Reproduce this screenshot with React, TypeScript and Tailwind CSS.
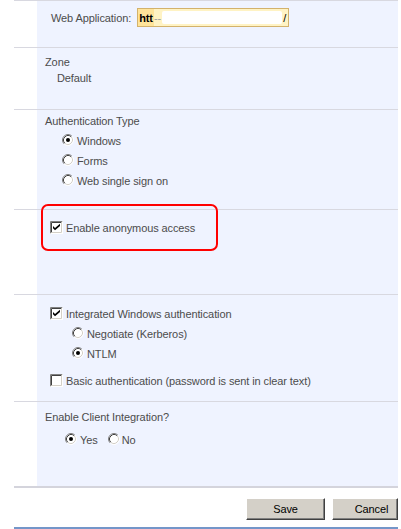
import React from "react";

function Radio({ checked = false }: { checked?: boolean }) {
  return (
    <svg width="12" height="12" viewBox="0 0 12 12" className="shrink-0">
      <circle cx="6" cy="6" r="5" fill="#ffffff" />
      <path d="M2.11 9.89 A5.5 5.5 0 0 1 9.89 2.11" fill="none" stroke="#808080" strokeWidth="1" />
      <path d="M9.89 2.11 A5.5 5.5 0 0 1 2.11 9.89" fill="none" stroke="#ffffff" strokeWidth="1" />
      <path d="M2.82 9.18 A4.5 4.5 0 0 1 9.18 2.82" fill="none" stroke="#404040" strokeWidth="1" />
      <path d="M9.18 2.82 A4.5 4.5 0 0 1 2.82 9.18" fill="none" stroke="#d4d0c8" strokeWidth="1" />
      {checked && <circle cx="6" cy="6" r="2" fill="#000000" />}
    </svg>
  );
}

function Checkbox({ checked = false }: { checked?: boolean }) {
  return (
    <svg width="13" height="13" viewBox="0 0 13 13" className="shrink-0">
      <rect x="0" y="0" width="13" height="13" fill="#ffffff" />
      <path d="M0.5 12.5 V0.5 H12.5" fill="none" stroke="#808080" />
      <path d="M1.5 11.5 V1.5 H11.5" fill="none" stroke="#404040" />
      <path d="M0.5 12.5 H12.5 V0.5" fill="none" stroke="#ffffff" />
      <path d="M1.5 11.5 H11.5 V1.5" fill="none" stroke="#d4d0c8" />
      {checked && (
        <path d="M3 5 L5 7 L10 2.8 L10 5 L5 9.2 L3 7.2 Z" fill="#000000" />
      )}
    </svg>
  );
}

function Row({ h, children }: { h: string; children?: React.ReactNode }) {
  return (
    <div className="flex border-t border-[#d8d8e0]">
      <div className="w-[23px] shrink-0 bg-white" />
      <div className={`flex-1 bg-[#eff3ff] ${h}`}>{children}</div>
    </div>
  );
}

function Option({ children, pl, checked, kind }: { children: React.ReactNode; pl: string; checked?: boolean; kind: "radio" | "check" }) {
  return (
    <div className={`flex h-[20px] items-center gap-[3px] ${pl}`}>
      {kind === "radio" ? <Radio checked={checked} /> : <Checkbox checked={checked} />}
      <span className="pt-[2px]">{children}</span>
    </div>
  );
}

export default function App() {
  return (
    <div
      className="relative h-[529px] w-[401px] overflow-hidden bg-white text-[11px] leading-[14px] tracking-[-0.1px] text-[#4c4c4c]"
      style={{ fontFamily: '"Liberation Sans", Arial, sans-serif' }}
    >
      <div className="ml-[14px] w-[384px]">
        <Row h="h-[46px]">
          <div className="mt-[7px] flex h-[19px] items-center pl-[14px]">
            <span>Web Application:</span>
            <div className="ml-[6px] flex h-[19px] w-[152px] items-center border border-[#d3b26c] bg-[#fff3c4] pr-[2px] text-black">
              <span className="flex h-full items-center bg-[#ffe49a] pl-[1px] pr-[1px] font-bold">htt</span>
              <span className="text-[#a0a0a0]">--</span>
              <div className="mx-[1px] h-[13px] flex-1 rounded-[2px] bg-white" />
              <span>/</span>
            </div>
          </div>
        </Row>

        <Row h="h-[61px]">
          <div className="pl-[8px] pt-[7px]">
            <div>Zone</div>
            <div className="mt-[2px] pl-[12px]">Default</div>
          </div>
        </Row>

        <Row h="h-[99px]">
          <div className="pl-[8px] pt-[4px]">
            <div>Authentication Type</div>
            <div className="mt-[2px]">
              <Option kind="radio" pl="pl-[17px]" checked>Windows</Option>
              <Option kind="radio" pl="pl-[17px]">Forms</Option>
              <Option kind="radio" pl="pl-[17px]">Web single sign on</Option>
            </div>
          </div>
        </Row>

        <Row h="h-[84px]">
          <div className="mt-[11px] flex h-[13px] items-center gap-[3px] pl-[13px]">
            <Checkbox checked />
            <span className="pt-[1px]">Enable anonymous access</span>
          </div>
        </Row>

        <Row h="h-[106px]">
          <div className="pt-[8px]">
            <Option kind="check" pl="pl-[13px]" checked>Integrated Windows authentication</Option>
            <Option kind="radio" pl="pl-[35px]">Negotiate (Kerberos)</Option>
            <Option kind="radio" pl="pl-[35px]" checked>NTLM</Option>
            <div className="mt-[7px]">
              <Option kind="check" pl="pl-[13px]">Basic authentication (password is sent in clear text)</Option>
            </div>
          </div>
        </Row>

        <Row h="h-[84px]">
          <div className="pl-[8px] pt-[8px]">
            <div>Enable Client Integration?</div>
            <div className="mt-[5px] flex h-[20px] items-center pl-[20px]">
              <Radio checked />
              <span className="ml-[3px] pt-[2px]">Yes</span>
              <span className="ml-[10px]"><Radio /></span>
              <span className="ml-[2px] pt-[2px]">No</span>
            </div>
          </div>
        </Row>

        <div className="h-[2px] bg-[#d4d4dc]" />

        <div className="flex h-[39px] items-start justify-end gap-[7px] pt-[10px] text-black">
          <button className="flex h-[22px] w-[79px] items-center justify-center border-t border-l border-t-white border-l-white border-b border-r border-b-[#404040] border-r-[#404040] bg-[#d4d0c8] shadow-[inset_-1px_-1px_#808080]">
            Save
          </button>
          <button className="flex h-[22px] w-[66px] items-center justify-center border-t border-l border-t-white border-l-white border-b border-r border-b-[#404040] border-r-[#404040] bg-[#d4d0c8] pl-[13px] shadow-[inset_-1px_-1px_#808080]">
            Cancel
          </button>
        </div>

        <div className="h-[2px] bg-[#7496c9]" />
      </div>

      <div className="absolute left-[41px] top-[204px] h-[47px] w-[177px] rounded-[7px] border-2 border-[#ff0000]" />
    </div>
  );
}
